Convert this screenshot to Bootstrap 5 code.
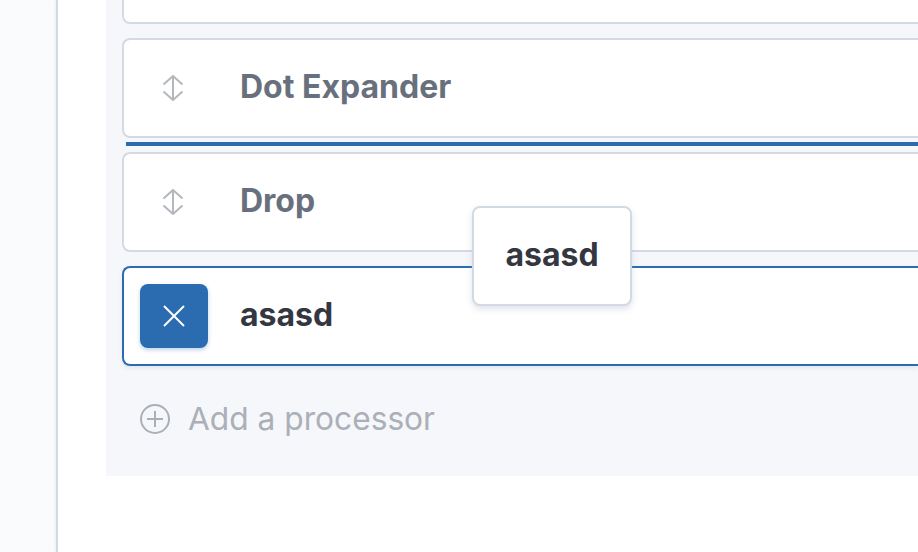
<!DOCTYPE html>
<html lang="en">
<head>
    <meta charset="UTF-8">
    <title>Processors</title>
    <link href="https://cdn.jsdelivr.net/npm/bootstrap@5.3.0/dist/css/bootstrap.min.css" rel="stylesheet">
    <style>
        html, body { height: 100%; }
        body { font-family: 'Inter', sans-serif; background: #fff; overflow: hidden; }
        .page_wrap { width: 918px; height: 552px; position: relative; }
        .side_nav { width: 58px; background: #FAFBFD; border-right: 2px solid #D3DAE6; box-shadow: inset -3px 0 3px -2px rgba(152, 162, 179, 0.12); }
        .main_area { padding-left: 48px; }
        .proc_panel { height: 476px; background: #F5F7FA; padding-left: 16px; }
        .proc_row {
            height: 100px;
            background: #fff;
            border: 2px solid #D3DAE6;
            border-right: 0;
            border-radius: 8px 0 0 8px;
            font-size: 32px;
            font-weight: 700;
            line-height: 1;
            color: #69707D;
            margin-bottom: 14px;
        }
        .proc_row span { padding-bottom: 2px; }
        .proc_row.cut_off { height: 24px; border-top: 0; border-radius: 0 0 0 8px; }
        .proc_row.tight { margin-bottom: 4px; }
        .proc_row.picked { border-color: #2B6CB0; color: #343741; box-shadow: 0 2px 4px rgba(152, 162, 179, 0.2); }
        .grip_box { width: 68px; height: 64px; margin-left: 16px; margin-right: 32px; border-radius: 8px; }
        .grip_box.on { background: #2B6CB0; box-shadow: 0 2px 4px rgba(43, 108, 176, 0.3); }
        .grip_icon { margin-right: 2px; }
        .drop_line { height: 4px; background: #2B6CB0; margin: 0 0 6px 4px; }
        .add_row { height: 78px; padding-left: 18px; font-size: 31.7px; line-height: 1; color: #ABB0B8; gap: 18px; }
        .drag_ghost {
            position: absolute;
            left: 472px;
            top: 206px;
            width: 160px;
            height: 100px;
            padding-bottom: 2px;
            background: #fff;
            border: 2px solid #D3DAE6;
            border-radius: 8px;
            font-size: 32px;
            font-weight: 700;
            line-height: 1;
            color: #343741;
            box-shadow: 0 3px 6px rgba(152, 162, 179, 0.3);
        }
    </style>
</head>
<body>

<div class="page_wrap d-flex">
    <div class="side_nav flex-shrink-0"></div>
    <div class="main_area flex-grow-1">
        <div class="proc_panel">
            <div class="proc_row cut_off"></div>

            <div class="proc_row tight d-flex align-items-center">
                <div class="grip_box d-flex align-items-center justify-content-center">
                    <svg class="grip_icon" width="24" height="26" viewBox="0 0 24 26" fill="none" stroke="#B4B7BD" stroke-width="2">
                        <path d="M12 1v24M2.500 9.500L12 1l9.500 8.500M2.500 16.500L12 25l9.500-8.500"/>
                    </svg>
                </div>
                <span>Dot Expander</span>
            </div>
            <div class="drop_line"></div>

            <div class="proc_row d-flex align-items-center">
                <div class="grip_box d-flex align-items-center justify-content-center">
                    <svg class="grip_icon" width="24" height="26" viewBox="0 0 24 26" fill="none" stroke="#B4B7BD" stroke-width="2">
                        <path d="M12 1v24M2.500 9.500L12 1l9.500 8.500M2.500 16.500L12 25l9.500-8.500"/>
                    </svg>
                </div>
                <span>Drop</span>
            </div>

            <div class="proc_row picked d-flex align-items-center">
                <div class="grip_box on d-flex align-items-center justify-content-center">
                    <svg width="22" height="22" viewBox="0 0 22 22" fill="none" stroke="#fff" stroke-width="2">
                        <path d="M1 1l20 20M21 1L1 21"/>
                    </svg>
                </div>
                <span>asasd</span>
            </div>

            <div class="add_row d-flex align-items-center">
                <svg width="30" height="30" viewBox="0 0 30 30" fill="none" stroke="#ABB0B8" stroke-width="2">
                    <circle cx="15" cy="15" r="14"/>
                    <path d="M15 7v16M7 15h16"/>
                </svg>
                <span>Add a processor</span>
            </div>
        </div>
    </div>

    <div class="drag_ghost d-flex align-items-center justify-content-center">asasd</div>
</div>

<script src="https://cdn.jsdelivr.net/npm/bootstrap@5.3.0/dist/js/bootstrap.bundle.min.js"></script>
</body>
</html>
